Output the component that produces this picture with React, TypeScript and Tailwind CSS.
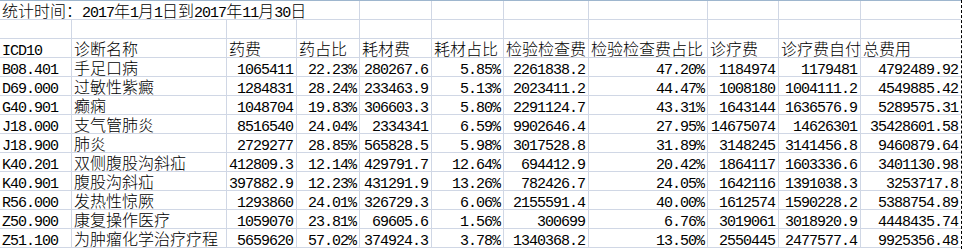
const cols = 'grid grid-cols-[72px_155px_70px_63px_72px_72px_85px_119px_71px_82px_100px]';

const headers = ['ICD10', '诊断名称', '药费', '药占比', '耗材费', '耗材占比', '检验检查费', '检验检查费占比', '诊疗费', '诊疗费自付', '总费用'];

const rows = [
  ['B08.401', '手足口病', '1065411', '22.23%', '280267.6', '5.85%', '2261838.2', '47.20%', '1184974', '1179481', '4792489.92'],
  ['D69.000', '过敏性紫癜', '1284831', '28.24%', '233463.9', '5.13%', '2023411.2', '44.47%', '1008180', '1004111.2', '4549885.42'],
  ['G40.901', '癫痫', '1048704', '19.83%', '306603.3', '5.80%', '2291124.7', '43.31%', '1643144', '1636576.9', '5289575.31'],
  ['J18.000', '支气管肺炎', '8516540', '24.04%', '2334341', '6.59%', '9902646.4', '27.95%', '14675074', '14626301', '35428601.58'],
  ['J18.900', '肺炎', '2729277', '28.85%', '565828.5', '5.98%', '3017528.8', '31.89%', '3148245', '3141456.8', '9460879.64'],
  ['K40.201', '双侧腹股沟斜疝', '412809.3', '12.14%', '429791.7', '12.64%', '694412.9', '20.42%', '1864117', '1603336.6', '3401130.98'],
  ['K40.901', '腹股沟斜疝', '397882.9', '12.23%', '431291.9', '13.26%', '782426.7', '24.05%', '1642116', '1391038.3', '3253717.8'],
  ['R56.000', '发热性惊厥', '1293860', '24.01%', '326729.3', '6.06%', '2155591.4', '40.00%', '1612574', '1590228.2', '5388754.89'],
  ['Z50.900', '康复操作医疗', '1059070', '23.81%', '69605.6', '1.56%', '300699', '6.76%', '3019061', '3018920.9', '4448435.74'],
  ['Z51.100', '为肿瘤化学治疗疗程', '5659620', '57.02%', '374924.3', '3.78%', '1340368.2', '13.50%', '2550445', '2477577.4', '9925356.48'],
];

// SimSun-like: half-width latin runs in a mono face, CJK in Noto
const Txt = ({ s }: { s: string }) => (
  <>
    {s
      .split(/([\x20-\x7e]+)/)
      .filter(Boolean)
      .map((p, i) =>
        /^[\x20-\x7e]+$/.test(p) ? (
          <span key={i} className="font-['Liberation_Mono',monospace] text-[15px] tracking-[-1px]">
            {p}
          </span>
        ) : (
          <span key={i} className="font-light">
            {p}
          </span>
        )
      )}
  </>
);

const Cell = ({ v = '', right = false, last = false }: { v?: string; right?: boolean; last?: boolean }) => (
  <div
    className={`h-[19px] border-b border-[#d0d7e5] whitespace-nowrap leading-[18px] ${
      last ? '' : 'border-r'
    } ${right ? 'text-right pr-[3px]' : 'pl-[2px]'}`}
  >
    <Txt s={v} />
  </div>
);

export default function App() {
  return (
    <div className="w-[962px] h-[249px] overflow-hidden bg-white flex text-black text-[16px] font-['Noto_Sans_CJK_SC',sans-serif]">
      <div className="w-[961px] border-t border-[#9eb6ce]">
        {/* title row */}
        <div className={cols}>
          <div className="col-span-4 h-[19px] border-b border-r border-[#d0d7e5] whitespace-nowrap leading-[18px] pl-[2px]">
            <Txt s="统计时间：2017年1月1日到2017年11月30日" />
          </div>
          {Array.from({ length: 7 }).map((_, i) => (
            <Cell key={i} last={i === 6} />
          ))}
        </div>

        {/* empty row */}
        <div className={cols}>
          {headers.map((_, i) => (
            <Cell key={i} last={i === headers.length - 1} />
          ))}
        </div>

        {/* header */}
        <div className={cols}>
          {headers.map((h, i) => (
            <Cell key={i} v={h} last={i === headers.length - 1} />
          ))}
        </div>

        {rows.map((r, ri) => (
          <div key={ri} className={cols}>
            {r.map((v, i) => (
              <Cell key={i} v={v} right={i > 1} last={i === r.length - 1} />
            ))}
          </div>
        ))}
      </div>
      <div className="w-px h-full border-l border-dashed border-black" />
    </div>
  );
}
